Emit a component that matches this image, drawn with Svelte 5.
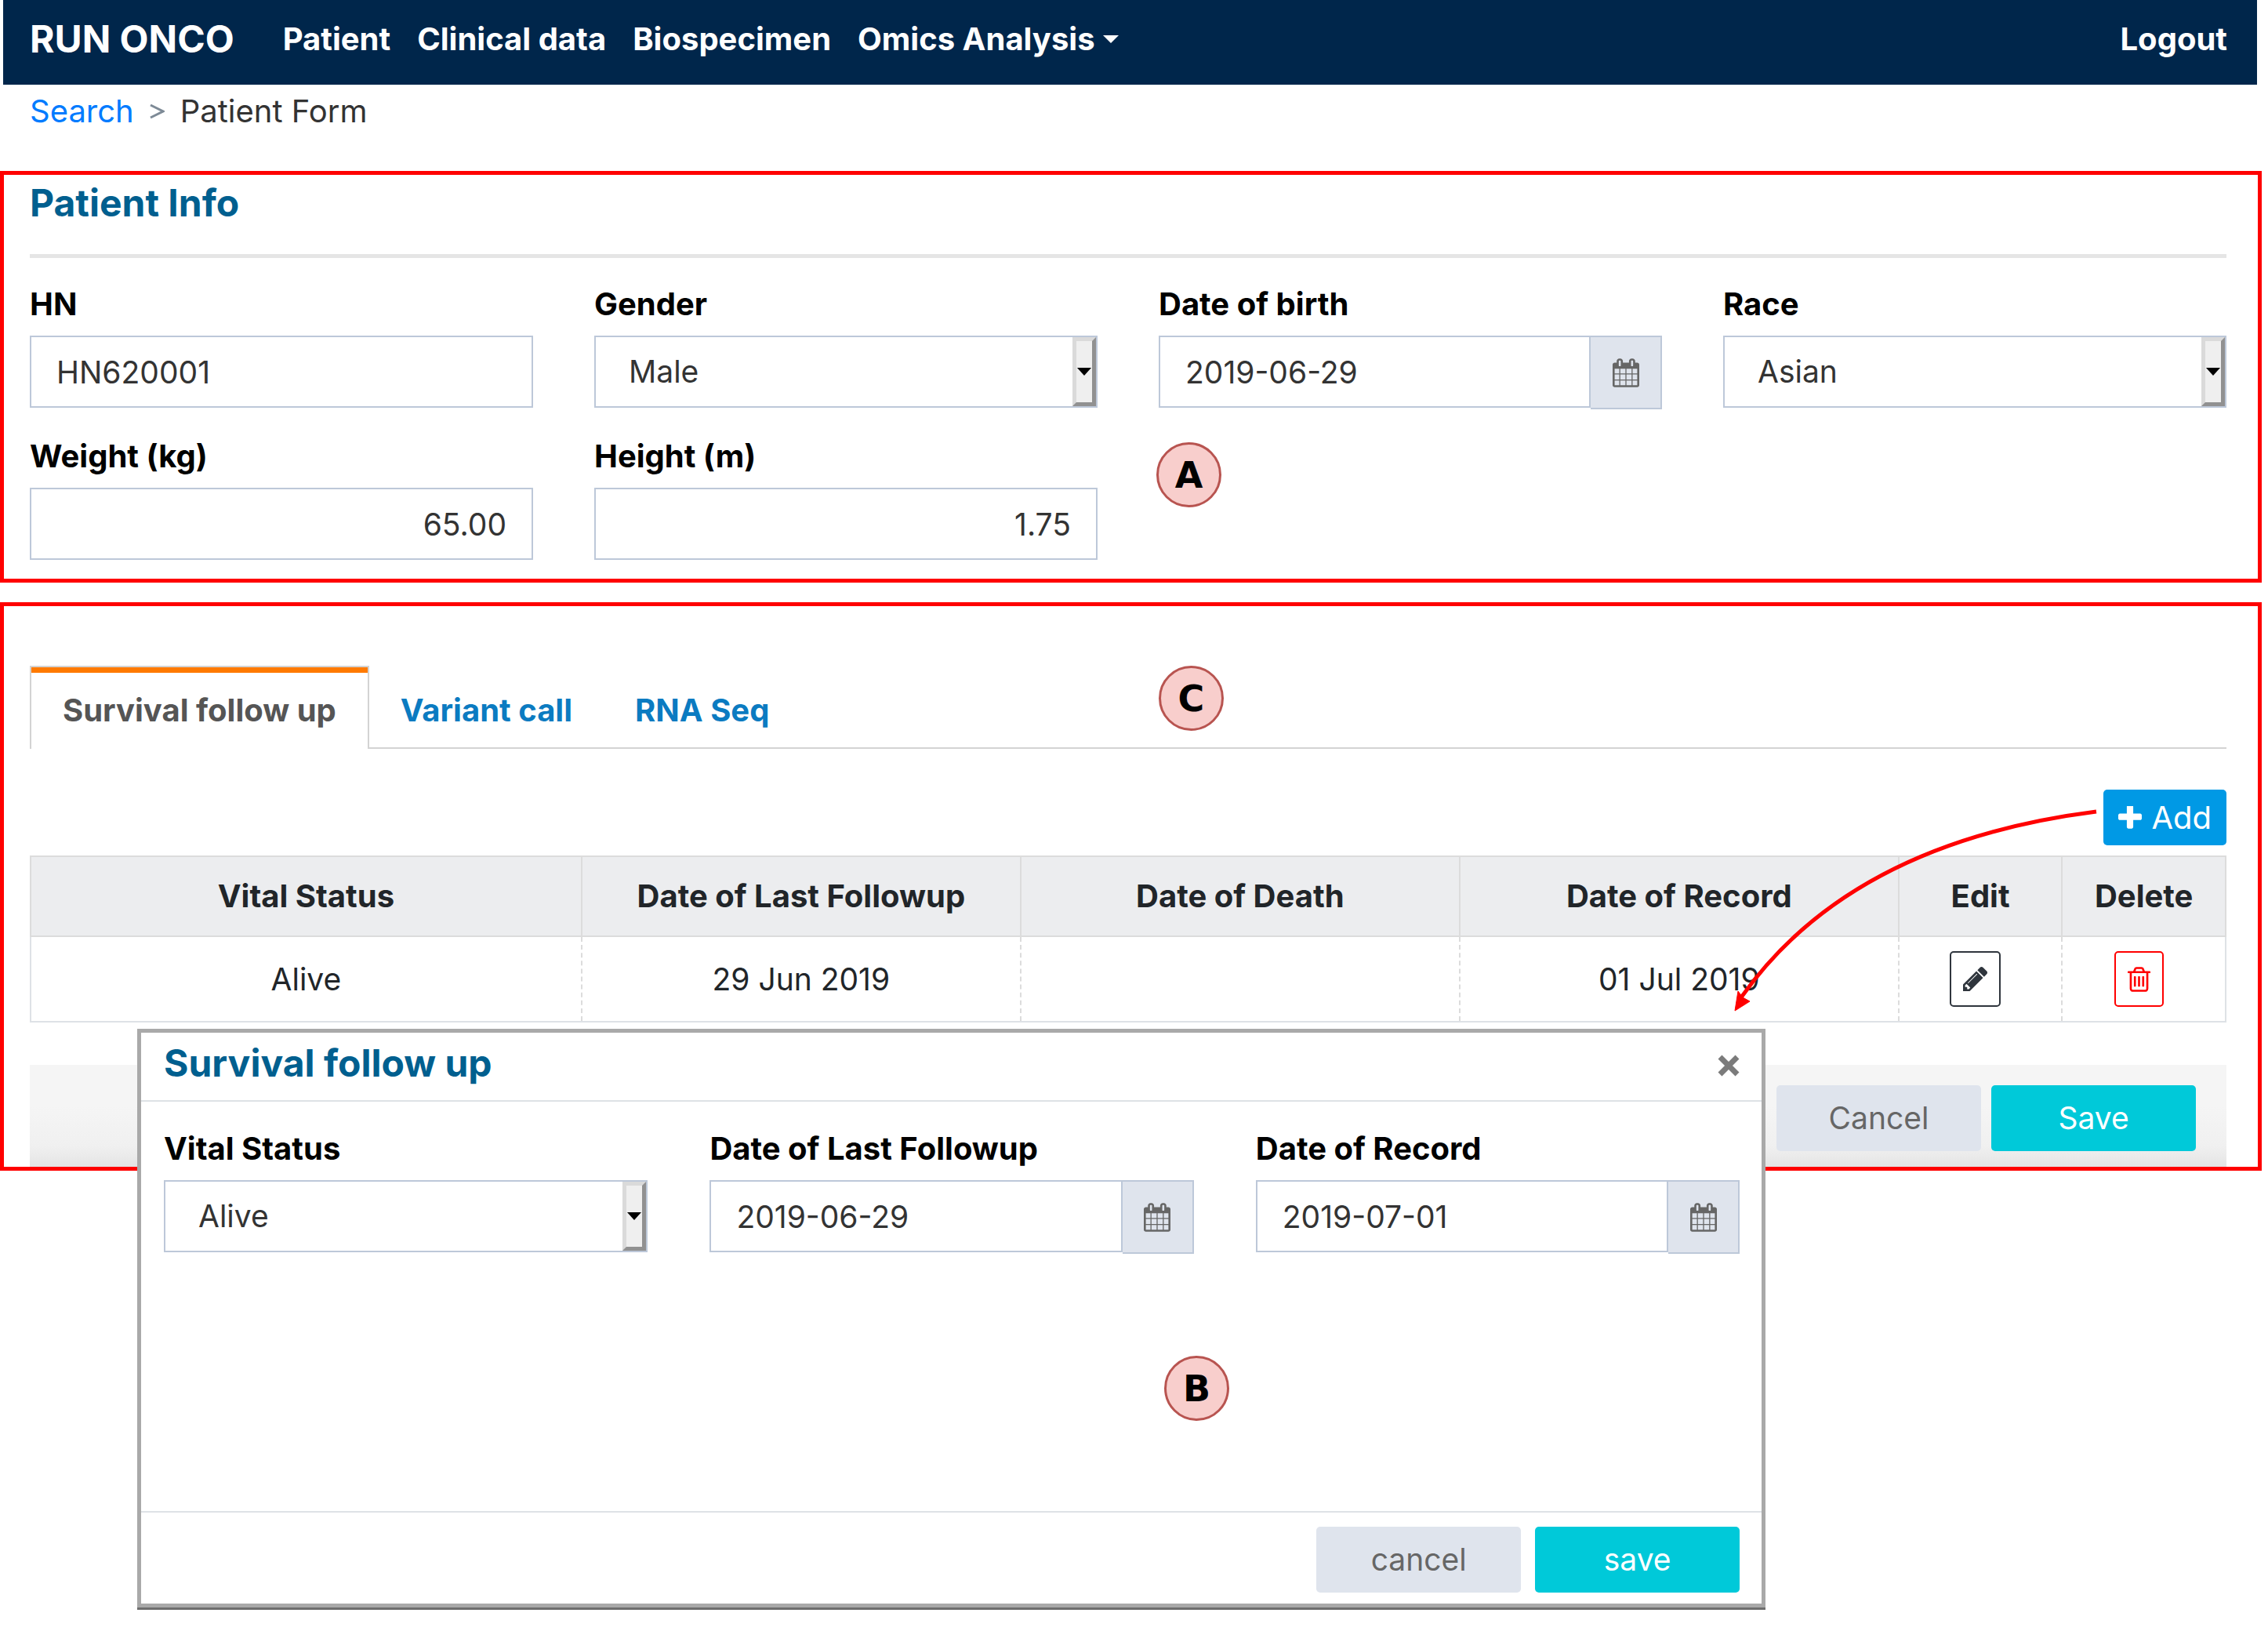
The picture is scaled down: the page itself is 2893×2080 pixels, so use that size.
<script>
  const navLinks = ['Patient', 'Clinical data', 'Biospecimen'];
  const tabs = ['Survival follow up', 'Variant call', 'RNA Seq'];
  const columns = ['Vital Status', 'Date of Last Followup', 'Date of Death', 'Date of Record', 'Edit', 'Delete'];
  const records = [{ status: 'Alive', followup: '29 Jun 2019', death: '', record: '01 Jul 2019' }];
  let activeTab = $state(0);
</script>

{#snippet selectBox(id, value)}
  <div class="select-wrap">
    <select {id} class="control">
      <option>{value}</option>
    </select>
    <span class="drop" aria-hidden="true"></span>
  </div>
{/snippet}

{#snippet dateBox(id, value)}
  <div class="date-wrap">
    <input {id} class="control" type="text" {value} />
    <button type="button" class="addon" aria-label="Choose date">
      <svg width="34" height="37" viewBox="0 0 1664 1792" fill="currentColor">
        <path d="M128 1664h288v-288h-288v288zM480 1664h320v-288h-320v288zM128 1312h288v-320h-288v320zM480 1312h320v-320h-320v320zM128 928h288v-288h-288v288zM864 1664h320v-288h-320v288zM480 928h320v-288h-320v288zM1248 1664h288v-288h-288v288zM864 1312h320v-320h-320v320zM512 448v-288q0-13-9.5-22.5t-22.5-9.5h-64q-13 0-22.5 9.5t-9.5 22.5v288q0 13 9.5 22.5t22.5 9.5h64q13 0 22.5-9.5t9.5-22.5zM1248 1312h288v-320h-288v320zM864 928h320v-288h-320v288zM1248 928h288v-288h-288v288zM1280 448v-288q0-13-9.5-22.5t-22.5-9.5h-64q-13 0-22.5 9.5t-9.5 22.5v288q0 13 9.5 22.5t22.5 9.5h64q13 0 22.5-9.5t9.5-22.5zM1664 384v1280q0 52-38 90t-90 38h-1408q-52 0-90-38t-38-90v-1280q0-52 38-90t90-38h128v-96q0-66 47-113t113-47h64q66 0 113 47t47 113v96h384v-96q0-66 47-113t113-47h64q66 0 113 47t47 113v96h128q52 0 90 38t38 90z" />
      </svg>
    </button>
  </div>
{/snippet}

<div class="page">
  <nav class="navbar">
    <a class="brand" href="#home">RUN ONCO</a>
    {#each navLinks as link}
      <a class="nav-link" href="#nav">{link}</a>
    {/each}
    <a class="nav-link menu" href="#nav">Omics Analysis<span class="caret"></span></a>
    <a class="nav-link logout" href="#logout">Logout</a>
  </nav>

  <div class="crumbs">
    <a href="#search">Search</a>
    <svg width="19" height="20" viewBox="0 0 19 20" fill="none" stroke="#7d8a96" stroke-width="3" aria-hidden="true">
      <path d="M1 2L17 10L1 18" />
    </svg>
    <span>Patient Form</span>
  </div>

  <section class="frame info">
    <h2>Patient Info</h2>
    <hr />
    <div class="fields">
      <div class="field">
        <label for="hn">HN</label>
        <input id="hn" class="control" type="text" value="HN620001" />
      </div>
      <div class="field">
        <label for="gender">Gender</label>
        {@render selectBox('gender', 'Male')}
      </div>
      <div class="field">
        <label for="birth">Date of birth</label>
        {@render dateBox('birth', '2019-06-29')}
      </div>
      <div class="field">
        <label for="race">Race</label>
        {@render selectBox('race', 'Asian')}
      </div>
      <div class="field">
        <label for="weight">Weight (kg)</label>
        <input id="weight" class="control number" type="text" value="65.00" />
      </div>
      <div class="field">
        <label for="height">Height (m)</label>
        <input id="height" class="control number" type="text" value="1.75" />
      </div>
    </div>
    <span class="badge badge-a">A</span>
  </section>

  <section class="frame follow">
    <div class="tabs" role="tablist">
      {#each tabs as tab, i}
        <button type="button" role="tab" class="tab" class:active={activeTab === i} aria-selected={activeTab === i} onclick={() => (activeTab = i)}>{tab}</button>
      {/each}
    </div>

    <div class="toolbar">
      <button type="button" class="add">
        <svg width="30" height="30" viewBox="192 192 1408 1408" fill="currentColor" aria-hidden="true">
          <path d="M1600 736v192q0 40-28 68t-68 28h-416v416q0 40-28 68t-68 28h-192q-40 0-68-28t-28-68v-416h-416q-40 0-68-28t-28-68v-192q0-40 28-68t68-28h416v-416q0-40 28-68t68-28h192q40 0 68 28t28 68v416h416q40 0 68 28t28 68z" />
        </svg>
        Add
      </button>
    </div>

    <table>
      <colgroup>
        <col /><col class="c-date" /><col class="c-date" /><col class="c-date" /><col class="c-action" /><col class="c-action" />
      </colgroup>
      <thead>
        <tr>
          {#each columns as column}<th>{column}</th>{/each}
        </tr>
      </thead>
      <tbody>
        {#each records as row}
          <tr>
            <td>{row.status}</td>
            <td>{row.followup}</td>
            <td>{row.death}</td>
            <td>{row.record}</td>
            <td>
              <button type="button" class="icon-btn edit" aria-label="Edit">
                <svg width="31" height="31" viewBox="128 149 1515 1515" fill="currentColor">
                  <path d="M491 1536l91-91-235-235-91 91v107h128v128h107zm523-928q0-22-22-22-10 0-17 7l-542 542q-7 7-7 17 0 22 22 22 10 0 17-7l542-542q7-7 7-17zm-54-192l416 416-832 832h-416v-416zm683 96q0 53-37 90l-166 166-416-416 166-165q36-38 90-38 53 0 91 38l235 234q37 39 37 91z" />
                </svg>
              </button>
            </td>
            <td>
              <button type="button" class="icon-btn delete" aria-label="Delete">
                <svg width="29" height="32" viewBox="192 128 1408 1536" fill="currentColor">
                  <path d="M704 736v576q0 14-9 23t-23 9h-64q-14 0-23-9t-9-23v-576q0-14 9-23t23-9h64q14 0 23 9t9 23zm256 0v576q0 14-9 23t-23 9h-64q-14 0-23-9t-9-23v-576q0-14 9-23t23-9h64q14 0 23 9t9 23zm256 0v576q0 14-9 23t-23 9h-64q-14 0-23-9t-9-23v-576q0-14 9-23t23-9h64q14 0 23 9t9 23zm128 724v-948h-896v948q0 22 7 40.5t14.5 27 10.5 8.5h832q3 0 10.5-8.5t14.5-27 7-40.5zm-672-1076h448l-48-117q-7-9-17-11h-317q-10 2-17 11zm928 32v64q0 14-9 23t-23 9h-96v948q0 83-47 143.5t-113 60.5h-832q-66 0-113-58.5t-47-141.5v-952h-96q-14 0-23-9t-9-23v-64q0-14 9-23t23-9h309l70-167q15-37 54-63t79-26h320q40 0 79 26t54 63l70 167h309q14 0 23 9t9 23z" />
                </svg>
              </button>
            </td>
          </tr>
        {/each}
      </tbody>
    </table>

    <div class="actions">
      <button type="button" class="btn plain">Cancel</button>
      <button type="button" class="btn primary">Save</button>
    </div>

    <span class="badge badge-c">C</span>

    <svg class="arrow" width="470" height="264" viewBox="0 0 470 264" aria-hidden="true">
      <path d="M464 5Q150 45 11 242" fill="none" stroke="#f00" stroke-width="5" />
      <path d="M3 259L7 234L13 242L22 247Z" fill="#f00" stroke="#f00" stroke-width="1" />
    </svg>

    <div class="modal" role="dialog" aria-labelledby="modal-title">
      <header>
        <h2 id="modal-title">Survival follow up</h2>
        <button type="button" class="close" aria-label="Close">
          <svg width="28" height="28" viewBox="0 0 28 28" fill="none" stroke="currentColor" stroke-width="7">
            <path d="M3 3L25 25M25 3L3 25" />
          </svg>
        </button>
      </header>
      <div class="modal-body">
        <div class="field">
          <label for="vital">Vital Status</label>
          {@render selectBox('vital', 'Alive')}
        </div>
        <div class="field">
          <label for="last">Date of Last Followup</label>
          {@render dateBox('last', '2019-06-29')}
        </div>
        <div class="field">
          <label for="record">Date of Record</label>
          {@render dateBox('record', '2019-07-01')}
        </div>
      </div>
      <footer>
        <button type="button" class="btn plain">cancel</button>
        <button type="button" class="btn primary">save</button>
      </footer>
      <span class="badge badge-b">B</span>
    </div>
  </section>
</div>

<style>
  :global(body) {
    background: #fff;
  }

  /* The bottom padding leaves room for the dialog, which hangs below the last section. */
  .page {
    padding: 0 8px 587px 0;
    font-family: Inter, 'Liberation Sans', sans-serif;
    font-size: 39px;
    line-height: 44px;
    color: #333;
  }

  .page :global(*) {
    box-sizing: border-box;
  }

  a {
    text-decoration: none;
  }

  button,
  input,
  select {
    font: inherit;
    margin: 0;
  }

  button {
    cursor: pointer;
  }

  svg {
    display: block;
    flex: none;
  }

  .navbar {
    display: flex;
    align-items: center;
    gap: 34px;
    height: 108px;
    margin: 0 6px 0 4px;
    padding: 0 38px 8px 34px;
    background: #00264b;
    font-size: 40px;
    font-weight: 700;
  }

  .navbar a {
    color: #fff;
  }

  .navbar .brand {
    margin-right: 28px;
    font-size: 48px;
  }

  .menu {
    display: flex;
    align-items: center;
    gap: 10px;
  }

  .caret {
    border: 10px solid transparent;
    border-top-color: #fff;
    border-bottom: 0;
  }

  .navbar .logout {
    margin-left: auto;
  }

  .crumbs {
    display: flex;
    align-items: center;
    gap: 20px;
    padding: 12px 38px 54px;
    font-size: 40px;
  }

  .crumbs a {
    color: #007bff;
  }

  .frame {
    position: relative;
    border: 5px solid #f00;
    padding: 8px 40px 24px 33px;
  }

  h2 {
    margin: 0;
    font-size: 48px;
    line-height: 56px;
    font-weight: 700;
    color: #005f8f;
  }

  hr {
    height: 5px;
    margin: 37px 0;
    border: 0;
    background: #e5e5e5;
  }

  .fields {
    display: grid;
    grid-template-columns: repeat(4, minmax(0, 1fr));
    gap: 40px 78px;
  }

  .field {
    display: flex;
    flex-direction: column;
    gap: 18px;
  }

  label {
    font-size: 40px;
    font-weight: 700;
    color: #000;
  }

  .control {
    display: block;
    width: 100%;
    min-width: 0;
    height: 92px;
    padding: 0 32px;
    border: 2px solid #bdc8d9;
    border-radius: 0;
    background: #fff;
    color: #333;
  }

  .number {
    text-align: right;
  }

  .select-wrap {
    position: relative;
  }

  select.control {
    appearance: none;
    padding-left: 42px;
  }

  .drop {
    position: absolute;
    top: 2px;
    right: 2px;
    bottom: 2px;
    display: grid;
    place-items: center;
    width: 30px;
    border: 5px solid;
    border-color: #dadada #919191 #919191 #dadada;
    background: #efefef;
    pointer-events: none;
  }

  .drop::after {
    content: '';
    border: 9px solid transparent;
    border-top: 10px solid #000;
    border-bottom: 0;
  }

  .date-wrap {
    display: flex;
    align-items: flex-start;
    height: 92px;
  }

  .date-wrap .control {
    flex: 1;
  }

  .addon {
    display: grid;
    place-items: center;
    width: 91px;
    height: 94px;
    padding: 0;
    border: 2px solid #bdc8d9;
    border-left: 0;
    background: #dfe4ed;
    color: #666;
  }

  .badge {
    position: absolute;
    display: grid;
    place-items: center;
    width: 83px;
    height: 83px;
    border: 3px solid #b85450;
    border-radius: 50%;
    background: #f8cecc;
    color: #000;
    font-family: 'DejaVu Sans', sans-serif;
    font-size: 46px;
    font-weight: 700;
  }

  .badge-a {
    top: 341px;
    left: 1470px;
  }

  .badge-c {
    top: 76px;
    left: 1473px;
  }

  .badge-b {
    top: 412px;
    left: 1305px;
  }

  .follow {
    margin-top: 25px;
    padding-top: 76px;
    padding-bottom: 0;
  }

  .tabs {
    display: flex;
    border-bottom: 2px solid #d3d3d3;
  }

  .tab {
    margin-bottom: -2px;
    padding: 33px 40px 27px;
    border: solid transparent;
    border-width: 2px 0 0;
    background: none;
    color: #0b7bc1;
    font-size: 40px;
    font-weight: 700;
    white-space: nowrap;
  }

  .tab.active {
    border-width: 2px 2px 0;
    border-color: #d3d3d3;
    background: #fff;
    box-shadow: inset 0 7px 0 #ff7a00;
    color: #555;
  }

  .toolbar {
    display: flex;
    justify-content: flex-end;
    padding: 52px 0 13px;
  }

  .add {
    display: flex;
    align-items: center;
    gap: 12px;
    height: 71px;
    padding: 0 19px;
    border: 0;
    border-radius: 5px;
    background: #0099e5;
    color: #fff;
    font-size: 40px;
  }

  table {
    width: 100%;
    table-layout: fixed;
    border-collapse: collapse;
    border: 2px solid #dee2e6;
    color: #212529;
  }

  .c-date {
    width: 20%;
  }

  .c-action {
    width: 7.45%;
  }

  th,
  td {
    padding: 0;
    text-align: center;
  }

  th {
    height: 102px;
    border: 2px solid #dcdcdc;
    background: #ecedef;
    font-size: 40px;
    font-weight: 700;
  }

  td {
    height: 109px;
  }

  td + td {
    border-left: 2px dashed #dcdcdc;
  }

  .icon-btn {
    display: inline-grid;
    place-items: center;
    height: 71px;
    margin-right: 13px;
    padding: 0 15px;
    border: 2px solid currentColor;
    border-radius: 5px;
    background: #fff;
    vertical-align: middle;
  }

  .edit {
    color: #2f353d;
  }

  .delete {
    color: #f00;
  }

  .actions {
    display: flex;
    justify-content: flex-end;
    gap: 13px;
    height: 130px;
    margin-top: 54px;
    padding: 26px 39px 0;
    background: linear-gradient(#f5f5f5 40%, #f0f0f0 80%, #e4e4e4);
  }

  .btn {
    width: 261px;
    height: 84px;
    padding: 0;
    border: 0;
    border-radius: 5px;
  }

  .plain {
    background: #dfe4ed;
    color: #666;
  }

  .primary {
    background: #00c9d9;
    color: #fff;
  }

  .arrow {
    position: absolute;
    top: 257px;
    right: 200px;
    pointer-events: none;
  }

  .modal {
    position: absolute;
    top: 539px;
    left: 170px;
    width: 72.25%;
    border: 5px solid #a9a9a9;
    background: #fff;
    box-shadow: 0 3px 0 #6e6e6e;
  }

  .modal header {
    display: flex;
    align-items: center;
    justify-content: space-between;
    padding: 11px 28px 19px 29px;
    border-bottom: 2px solid #dee2e6;
  }

  .close {
    padding: 6px 0 0;
    border: 0;
    background: none;
    color: #7b7b7b;
  }

  .modal-body {
    display: grid;
    grid-template-columns: repeat(3, minmax(0, 1fr));
    align-items: start;
    gap: 79px;
    min-height: 522px;
    padding: 38px 28px 0 29px;
  }

  .modal footer {
    display: flex;
    justify-content: flex-end;
    gap: 18px;
    padding: 18px 28px 14px;
    border-top: 2px solid #dee2e6;
  }
</style>
